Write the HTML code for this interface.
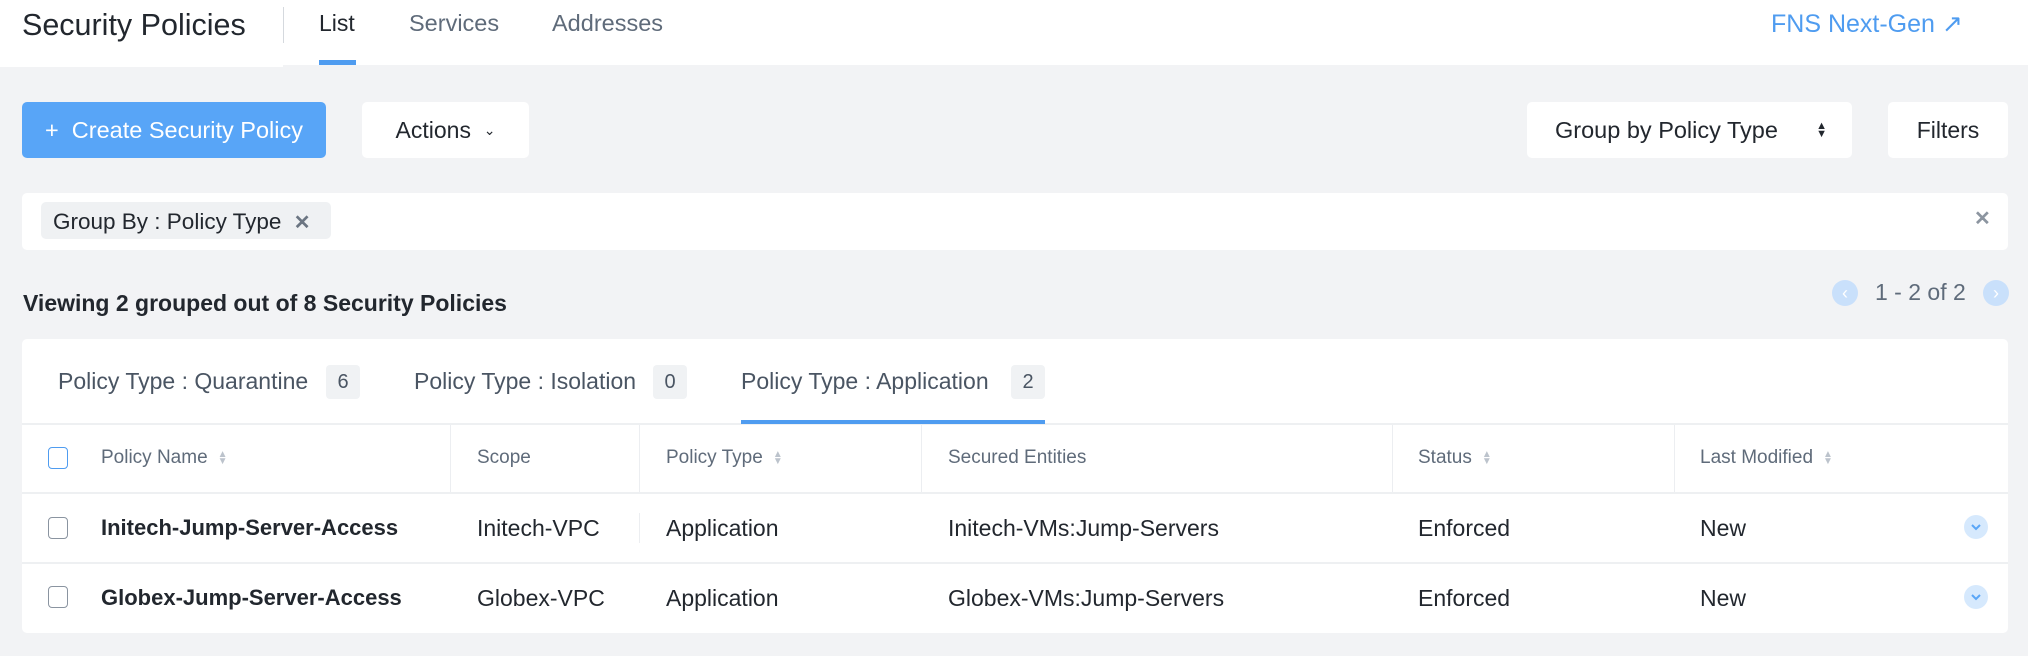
<!DOCTYPE html>
<html><head><meta charset="utf-8"><style>
*{box-sizing:border-box;margin:0;padding:0}
body{width:2028px;height:656px;background:#f2f3f5;font-family:"Liberation Sans",sans-serif;color:#22272e;position:relative;overflow:hidden}
.a{position:absolute;white-space:nowrap}
.btn{position:absolute;background:#fff;border-radius:5px;height:56px;top:102px;display:flex;align-items:center;font-size:23px}
.hd{font-size:19px;color:#5f6b7a}
.cell{font-size:23px;color:#22272e}
.cb{position:absolute;width:20px;height:22px;border:1.5px solid #8a94a0;border-radius:4px;left:48px}
.sort{display:inline-block;margin-left:10px;font-size:10px;color:#bcc3cc;vertical-align:middle;line-height:7px}
.badge{position:absolute;top:365px;height:34px;width:34px;background:#f0f2f4;border-radius:4px;font-size:20px;color:#4a5563;display:flex;align-items:center;justify-content:center}
.vl{position:absolute;width:1px;background:#eceef1}
.exp{position:absolute;left:1964px;width:24px;height:24px;border-radius:50%;background:#d6e9fd}
.tab{position:absolute;top:368px;font-size:23px;color:#4a5563;white-space:nowrap}
</style></head><body>
<div class="a" style="left:0;top:0;width:2028px;height:65px;background:#fff"></div>
<div class="a" style="left:0;top:0;width:283px;height:67px;background:#fff"></div>
<div class="a" style="left:22px;top:8px;font-size:30.5px;color:#22272e">Security Policies</div>
<div class="a" style="left:283px;top:7px;width:1px;height:36px;background:#d5d9de"></div>
<div class="a" style="left:319px;top:10px;font-size:23px;color:#22272e">List</div>
<div class="a" style="left:319px;top:60px;width:37px;height:5px;background:#4f9cf0"></div>
<div class="a" style="left:409px;top:10px;font-size:23.5px;color:#5f6b7a">Services</div>
<div class="a" style="left:552px;top:10px;font-size:23.5px;color:#5f6b7a">Addresses</div>
<div class="a" style="left:1771px;top:9px;font-size:25px;color:#4f9cf0">FNS Next-Gen ↗</div>

<div class="btn" style="left:22px;width:304px;background:#58a5f7;color:#fff;justify-content:center;font-size:23.5px">+&nbsp; Create Security Policy</div>
<div class="btn" style="left:362px;width:167px;justify-content:center">Actions &nbsp;<span style="font-size:14px">⌄</span></div>
<div class="btn" style="left:1527px;width:325px;padding-left:28px;font-size:23.5px">Group by Policy Type<span style="position:absolute;right:25px;font-size:11px;line-height:8px">▲<br>▼</span></div>
<div class="btn" style="left:1888px;width:120px;justify-content:center">Filters</div>

<div class="a" style="left:22px;top:193px;width:1986px;height:57px;background:#fff;border-radius:5px"></div>
<div class="a" style="left:41px;top:202px;width:290px;height:37px;background:#eff1f3;border-radius:5px;font-size:22.5px;padding:7px 0 0 12px">Group By : Policy Type <span style="color:#6b7582;font-weight:bold;margin-left:6px;font-size:20px">✕</span></div>
<div class="a" style="left:1974px;top:206px;font-size:20px;color:#8c95a0;font-weight:bold">✕</div>

<div class="a" style="left:23px;top:290px;font-size:23px;font-weight:bold">Viewing 2 grouped out of 8 Security Policies</div>
<div class="a" style="left:1832px;top:280px;width:26px;height:26px;border-radius:50%;background:#c9e0fb;color:#fff;font-size:18px;text-align:center;line-height:26px">‹</div>
<div class="a" style="left:1875px;top:279px;font-size:23px;color:#5f6b7a">1 - 2 of 2</div>
<div class="a" style="left:1983px;top:280px;width:26px;height:26px;border-radius:50%;background:#c9e0fb;color:#fff;font-size:18px;text-align:center;line-height:26px">›</div>

<div class="a" style="left:22px;top:339px;width:1986px;height:294px;background:#fff;border-radius:5px"></div>
<div class="tab" style="left:58px">Policy Type : Quarantine</div>
<div class="badge" style="left:326px">6</div>
<div class="tab" style="left:414px">Policy Type : Isolation</div>
<div class="badge" style="left:653px">0</div>
<div class="tab" style="left:741px">Policy Type : Application</div>
<div class="badge" style="left:1011px">2</div>
<div class="a" style="left:22px;top:423px;width:1986px;height:2px;background:#eef0f2"></div>
<div class="a" style="left:741px;top:420px;width:304px;height:4px;background:#4f9cf0"></div>

<div class="vl" style="left:450px;top:425px;height:68px"></div>
<div class="vl" style="left:639px;top:425px;height:68px"></div>
<div class="vl" style="left:921px;top:425px;height:68px"></div>
<div class="vl" style="left:1392px;top:425px;height:68px"></div>
<div class="vl" style="left:1674px;top:425px;height:68px"></div>
<div class="vl" style="left:639px;top:513px;height:30px"></div>
<div class="a" style="left:22px;top:492px;width:1986px;height:2px;background:#eef0f2"></div>
<div class="a" style="left:22px;top:562px;width:1986px;height:2px;background:#eef0f2"></div>

<div class="cb" style="top:447px;border-color:#4f9cf0"></div>
<div class="a hd" style="left:101px;top:447px">Policy Name<span class="sort">▲<br>▼</span></div>
<div class="a hd" style="left:477px;top:447px">Scope</div>
<div class="a hd" style="left:666px;top:447px">Policy Type<span class="sort">▲<br>▼</span></div>
<div class="a hd" style="left:948px;top:447px">Secured Entities</div>
<div class="a hd" style="left:1418px;top:447px">Status<span class="sort">▲<br>▼</span></div>
<div class="a hd" style="left:1700px;top:447px">Last Modified<span class="sort">▲<br>▼</span></div>

<div class="cb" style="top:517px"></div>
<div class="a cell" style="left:101px;top:515px;font-weight:bold;font-size:22px">Initech-Jump-Server-Access</div>
<div class="a cell" style="left:477px;top:515px">Initech-VPC</div>
<div class="a cell" style="left:666px;top:515px">Application</div>
<div class="a cell" style="left:948px;top:515px">Initech-VMs:Jump-Servers</div>
<div class="a cell" style="left:1418px;top:515px">Enforced</div>
<div class="a cell" style="left:1700px;top:515px">New</div>
<div class="exp" style="top:515px"><svg width="24" height="24"><path d="M8 10l4 4 4-4" stroke="#5aa6f7" stroke-width="2" fill="none"/></svg></div>

<div class="cb" style="top:586px"></div>
<div class="a cell" style="left:101px;top:585px;font-weight:bold;font-size:22px">Globex-Jump-Server-Access</div>
<div class="a cell" style="left:477px;top:585px">Globex-VPC</div>
<div class="a cell" style="left:666px;top:585px">Application</div>
<div class="a cell" style="left:948px;top:585px">Globex-VMs:Jump-Servers</div>
<div class="a cell" style="left:1418px;top:585px">Enforced</div>
<div class="a cell" style="left:1700px;top:585px">New</div>
<div class="exp" style="top:585px"><svg width="24" height="24"><path d="M8 10l4 4 4-4" stroke="#5aa6f7" stroke-width="2" fill="none"/></svg></div>
</body></html>
